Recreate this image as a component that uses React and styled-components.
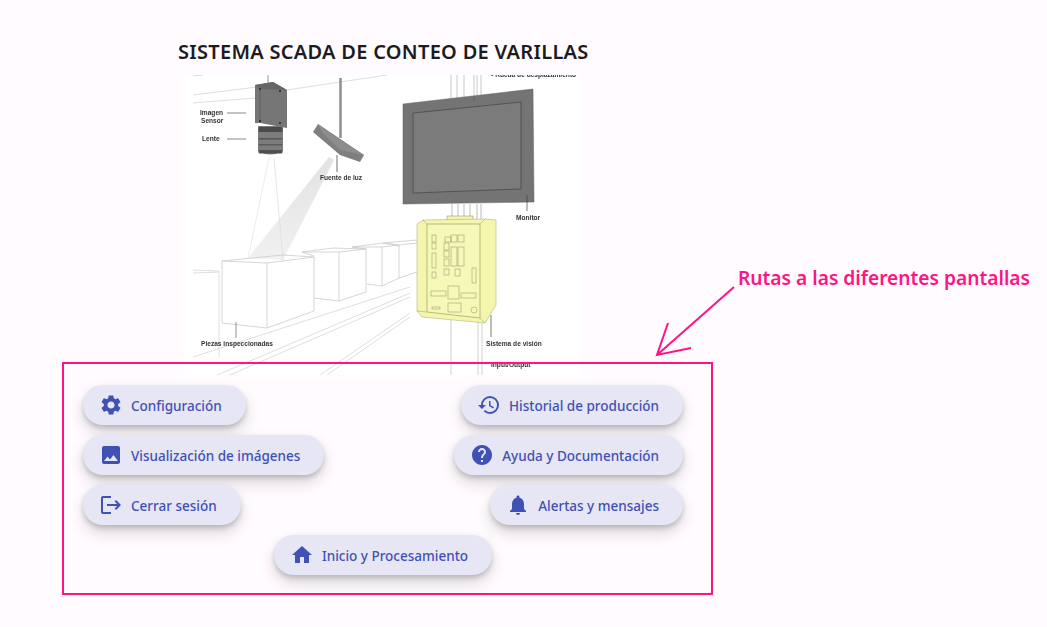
import * as React from "react";
import styled, { createGlobalStyle } from "styled-components";
import {
  MdSettings,
  MdImage,
  MdLogout,
  MdHistory,
  MdHelp,
  MdNotifications,
  MdHome,
} from "react-icons/md";

const GlobalStyle = createGlobalStyle`
  html, body {
    margin: 0;
    padding: 0;
    background: #fffbfe;
    overflow: hidden;
  }
`;

const pink = "#ff1483";
const uiFont = `"Noto Sans", "Open Sans", "Liberation Sans", sans-serif`;

const Page = styled.div`
  position: relative;
  width: 1047px;
  height: 627px;
  padding-top: 40px;
  box-sizing: border-box;
  font-family: ${uiFont};
`;

const Title = styled.h1`
  margin: 0 0 0 178px;
  height: 35px;
  font-size: 20px;
  line-height: 24px;
  font-weight: 600;
  letter-spacing: 0.29px;
  color: #1c1b1f;
  white-space: nowrap;
`;

const Diagram = styled.svg`
  display: block;
  width: 400px;
  height: 300px;
  margin-left: 180px;
  filter: blur(0.35px);
`;

const RoutesFrame = styled.section`
  position: relative;
  display: flex;
  flex-direction: column;
  gap: 10px;
  width: 651px;
  height: 233px;
  margin: -13px 0 0 62px;
  padding: 21px 28px 18px 19px;
  box-sizing: border-box;
  border: 2px solid ${pink};
`;

const Row = styled.div`
  display: flex;
  justify-content: ${(p) => p.$justify || "space-between"};
`;

const RouteButton = styled.button`
  display: flex;
  align-items: center;
  gap: 8px;
  height: 40px;
  padding: 0 24px 0 16px;
  border: none;
  border-radius: 20px;
  background: #e6e6f5;
  color: #3f51b5;
  font-family: ${uiFont};
  font-size: 13.5px;
  font-weight: 500;
  white-space: nowrap;
  box-shadow: 0 3px 5px rgba(0, 0, 0, 0.17), 0 8px 16px rgba(0, 0, 0, 0.15);

  svg {
    width: 24px;
    height: 24px;
    flex: none;
  }
`;

const ButtonLabel = styled.span`
  padding-top: 2px;
`;

const Callout = styled.div`
  position: absolute;
  left: 738px;
  top: 264px;
  font-size: 19.2px;
  line-height: 28px;
  font-weight: 600;
  color: ${pink};
  white-space: nowrap;
`;

const CalloutArrow = styled.svg`
  position: absolute;
  left: 650px;
  top: 280px;
  width: 90px;
  height: 80px;
`;

const Label = styled.text`
  font-family: "Liberation Sans", sans-serif;
  font-size: ${(p) => p.$size || 6.6}px;
  font-weight: 700;
  fill: #333;
`;

const routeRows = [
  {
    items: [
      { icon: <MdSettings />, label: "Configuración" },
      { icon: <MdHistory />, label: "Historial de producción" },
    ],
  },
  {
    items: [
      { icon: <MdImage />, label: "Visualización de imágenes" },
      { icon: <MdHelp />, label: "Ayuda y Documentación" },
    ],
  },
  {
    items: [
      { icon: <MdLogout />, label: "Cerrar sesión" },
      { icon: <MdNotifications />, label: "Alertas y mensajes" },
    ],
  },
  {
    justify: "center",
    items: [{ icon: <MdHome />, label: "Inicio y Procesamiento" }],
  },
];

// thin grey lines of the drawing, in page coordinates
const sketchLines = [
  [193, 95, 257, 87],
  [193, 103, 255, 98],
  [287, 90, 387, 75],
  [193, 76, 203, 75],
  [193, 270, 219, 271],
  [193, 273, 219, 272],
  [219, 271, 219, 357],
  [193, 357, 410, 287],
  [217, 375, 410, 293],
  [230, 375, 410, 297],
  [320, 375, 410, 313],
  [327, 375, 410, 317],
];

const boxes = [
  // front, side, back top corner
  "222,261 267,263 267,328 222,323 222,261 M267,263 314,257 314,311 267,328 M222,261 283,255 314,257",
  "314,256 302,252 339,252 366,249 366,292 339,301 314,298 M339,252 339,301 M302,252 333,248 366,249",
  "366,249 352,247 382,247 399,245 399,278 382,286 367,284 M382,247 382,286 M352,247 383,243 399,245",
  "399,246 383,243 417,240 M399,278 417,272 M399,245 417,243",
];

const lensRings = [
  { y: 127, h: 5, fill: "#4a4a4a" },
  { y: 138, h: 1.5, fill: "#555" },
  { y: 144, h: 1.5, fill: "#5a5a5a" },
  { y: 150, h: 3.5, fill: "#4f4f4f" },
];

function VisionSketch() {
  return (
    <Diagram viewBox="180 75 400 300">
      <defs>
        <linearGradient id="beam" x1="0" y1="0" x2="0" y2="1">
          <stop offset="0" stopColor="#e2e2e2" />
          <stop offset="1" stopColor="#f1f1f1" />
        </linearGradient>
      </defs>
      <rect x="183" y="75" width="397" height="300" fill="#ffffff" />
      {sketchLines.map(([x1, y1, x2, y2], i) => (
        <line key={i} x1={x1} y1={y1} x2={x2} y2={y2} stroke="#d6d6d6" strokeWidth="0.8" />
      ))}

      <polygon points="329,157 334,160 283,260 248,258" fill="url(#beam)" />
      <line x1="269" y1="158" x2="248" y2="258" stroke="#e6e6e6" strokeWidth="0.8" />
      <line x1="274" y1="158" x2="283" y2="260" stroke="#e0e0e0" strokeWidth="0.8" />
      {boxes.map((d, i) => (
        <path
          key={i}
          d={"M" + d.replace(/M/g, " M")}
          fill="none"
          stroke="#cbcbcb"
          strokeWidth="0.8"
        />
      ))}

      {/* camera */}
      <line x1="268" y1="75" x2="268" y2="90" stroke="#999" />
      <path d="M258,126 L283,126 L283,151 Q270,158 258,151 Z" fill="#7c7c7c" />
      {lensRings.map((r) => (
        <rect key={r.y} x="258.5" y={r.y} width="24" height={r.h} rx="1.5" fill={r.fill} />
      ))}
      <polygon points="255,85 273,82 287,90 287,128 260,123 255,123" fill="#767676" />
      <polygon points="255,85 273,82 287,90 260,89" fill="#666" />
      <line x1="260" y1="89" x2="260" y2="123" stroke="#5a5a5a" strokeWidth="0.7" />
      <circle cx="260" cy="89" r="1" fill="#222" />
      <circle cx="280" cy="91" r="1" fill="#222" />
      <circle cx="260" cy="121" r="1" fill="#222" />
      <circle cx="280" cy="123" r="1" fill="#222" />

      {/* light */}
      <line x1="340.5" y1="78" x2="340.5" y2="138" stroke="#8f8f8f" strokeWidth="2.5" />
      <polygon points="318,124 364,155 360,162 340,155 313,132" fill="#7f7f7f" />
      <polygon points="318,124 345,143 364,155 340,150 322,132" fill="#8d8d8d" />
      <line x1="337" y1="155" x2="337" y2="172" stroke="#333" strokeWidth="0.7" />

      {/* monitor */}
      {[451, 457, 464, 474, 477, 481].map((x) => (
        <line key={x} x1={x} y1="75" x2={x} y2="100" stroke="#bbb" strokeWidth="0.8" />
      ))}
      {[452, 458, 464, 470, 477, 481].map((x) => (
        <line key={x} x1={x} y1="204" x2={x} y2="222" stroke="#aaa" strokeWidth="0.8" />
      ))}
      <polygon points="403,104 533,89 534,202 403,204" fill="#747474" stroke="#5e5e5e" strokeWidth="0.5" />
      <polygon points="413,113 521,102 521,189 413,193" fill="#7b7b7b" stroke="#4a4a4a" strokeWidth="0.8" />
      <line x1="474" y1="97" x2="474" y2="101" stroke="#555" strokeWidth="0.7" />
      <line x1="527" y1="195" x2="527" y2="211" stroke="#444" strokeWidth="0.7" />

      {/* vision box */}
      {[451, 478, 482].map((x) => (
        <line key={x} x1={x} y1="320" x2={x} y2="375" stroke="#c4c4c4" strokeWidth="0.8" />
      ))}
      <rect x="447" y="216" width="26" height="5" fill="#f3f5b5" stroke="#8c8c5a" strokeWidth="0.5" />
      <polygon
        points="417,224 423,220 485,219 496,220 496,305 485,323 422,317 417,311"
        fill="#f4f6ad"
        stroke="#b4b67e"
        strokeWidth="0.6"
      />
      <polygon points="427,224 480,224 480,318 427,312" fill="#f6f8b8" stroke="#8f9160" strokeWidth="0.6" />
      <path
        d="M423,220 427,224 M485,219 480,224 M417,311 427,312 M485,323 480,318"
        stroke="#a9ab74"
        strokeWidth="0.6"
      />
      <g fill="none" stroke="#9fa170" strokeWidth="0.6">
        <rect x="432" y="235" width="4" height="7" />
        <rect x="432" y="243" width="4" height="6" />
        <rect x="432" y="253" width="4" height="15" />
        <rect x="432" y="272" width="4" height="6" />
        <rect x="445" y="237" width="6" height="5" />
        <rect x="444" y="243" width="5" height="7" />
        <rect x="444" y="251" width="5" height="6" />
        <rect x="444" y="259" width="5" height="7" />
        <rect x="444" y="269" width="5" height="6" />
        <rect x="451" y="235" width="6" height="7" />
        <rect x="458" y="235" width="6" height="7" />
        <rect x="451" y="247" width="6" height="19" />
        <rect x="458" y="247" width="6" height="19" />
        <rect x="455" y="269" width="5" height="7" />
        <rect x="472" y="268" width="4" height="15" />
        <rect x="431" y="291" width="15" height="5" />
        <rect x="448" y="286" width="11" height="13" />
        <rect x="461" y="293" width="15" height="5" />
        <rect x="448" y="303" width="13" height="9" />
        <rect x="432" y="307" width="8" height="2" />
        <circle cx="474" cy="310" r="3" />
      </g>
      <line x1="491" y1="315" x2="491" y2="337" stroke="#444" strokeWidth="0.7" />
      <line x1="236" y1="322" x2="236" y2="338" stroke="#666" strokeWidth="0.7" />
      <line x1="227" y1="113" x2="246" y2="113" stroke="#555" strokeWidth="0.7" />
      <line x1="227" y1="139" x2="246" y2="139" stroke="#555" strokeWidth="0.7" />

      <Label x="200" y="115">Imagen</Label>
      <Label x="201" y="123">Sensor</Label>
      <Label x="202" y="141">Lente</Label>
      <Label x="320" y="180">Fuente de luz</Label>
      <Label x="491" y="77">• Rueda de desplazamiento</Label>
      <Label x="516" y="220">Monitor</Label>
      <Label x="201" y="346">Piezas inspeccionadas</Label>
      <Label x="486" y="346">Sistema de visión</Label>
      <Label x="491" y="367">Input/Output</Label>
    </Diagram>
  );
}

export default function App() {
  return (
    <Page>
      <GlobalStyle />
      <Title>SISTEMA SCADA DE CONTEO DE VARILLAS</Title>
      <VisionSketch />
      <RoutesFrame>
        {routeRows.map((row, i) => (
          <Row key={i} $justify={row.justify}>
            {row.items.map((item) => (
              <RouteButton key={item.label}>
                {item.icon}
                <ButtonLabel>{item.label}</ButtonLabel>
              </RouteButton>
            ))}
          </Row>
        ))}
      </RoutesFrame>
      <Callout>Rutas a las diferentes pantallas</Callout>
      <CalloutArrow viewBox="650 280 90 80">
        <path
          d="M734 287 657 355 M668 323 657 355 691 348"
          fill="none"
          stroke={pink}
          strokeWidth="2"
        />
      </CalloutArrow>
    </Page>
  );
}
